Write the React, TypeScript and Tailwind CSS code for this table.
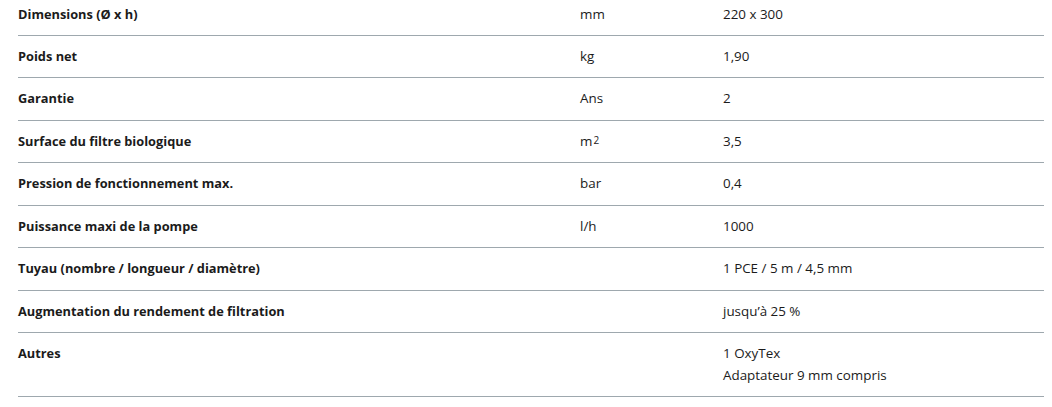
import React from 'react';

type Row = { label: string; unit?: React.ReactNode; value: React.ReactNode };

const rows: Row[] = [
  { label: 'Dimensions (Ø x h)', unit: 'mm', value: '220 x 300' },
  { label: 'Poids net', unit: 'kg', value: '1,90' },
  { label: 'Garantie', unit: 'Ans', value: '2' },
  {
    label: 'Surface du filtre biologique',
    unit: (
      <>
        m<sup className="text-[10px] relative -top-[2px] ml-[1px]">2</sup>
      </>
    ),
    value: '3,5',
  },
  { label: 'Pression de fonctionnement max.', unit: 'bar', value: '0,4' },
  { label: 'Puissance maxi de la pompe', unit: 'l/h', value: '1000' },
  { label: 'Tuyau (nombre / longueur / diamètre)', value: '1 PCE / 5 m / 4,5 mm' },
  { label: 'Augmentation du rendement de filtration', value: 'jusqu’à 25 %' },
  {
    label: 'Autres',
    value: (
      <>
        <div>1 OxyTex</div>
        <div>Adaptateur 9 mm compris</div>
      </>
    ),
  },
];

export default function App() {
  return (
    <div className="w-[1052px] h-[407px] overflow-hidden bg-white font-['Open_Sans',sans-serif] text-[13.4px] text-[#1b1b1b]">
      <div className="ml-[18px] w-[1026px] -mt-[6.43px]">
        {rows.map((row) => (
          <div
            key={row.label}
            className="grid grid-cols-[562px_143px_1fr] py-[10px] leading-[21.43px] border-b border-[#9ea8ae]"
          >
            <div className="font-bold text-[12.8px]">{row.label}</div>
            <div>{row.unit}</div>
            <div>{row.value}</div>
          </div>
        ))}
      </div>
    </div>
  );
}
